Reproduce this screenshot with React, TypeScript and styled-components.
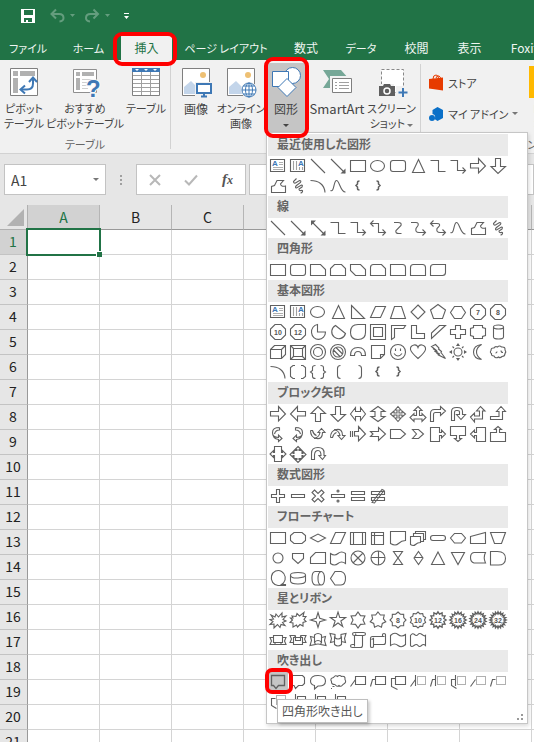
import React from "react";
import styled, { createGlobalStyle, css } from "styled-components";

const GREEN = "#217346";
const INK = "#606060";
const BLUE = "#3e78b5";

const GlobalStyle = createGlobalStyle`
  *, *::before, *::after { box-sizing: border-box; }
  body {
    margin: 0;
    overflow: hidden;
    font-family: "Noto Sans CJK JP", "Noto Sans", sans-serif;
    font-size: 12px;
    color: #444444;
  }
  button, input {
    font: inherit;
    color: inherit;
    border: 0;
    margin: 0;
    padding: 0;
    background: none;
    border-radius: 0;
  }
  svg { display: block; flex: none; }
`;

/* ---------- layout ---------- */

const Window = styled.div`
  display: flex;
  flex-direction: column;
  height: 100vh;
  overflow: hidden;
  background: #ffffff;
`;

const Marker = styled.span<{ $inset: string; $radius: number }>`
  position: absolute;
  z-index: 5;
  inset: ${(p) => p.$inset};
  border: 4px solid #ff0000;
  border-radius: ${(p) => p.$radius}px;
  pointer-events: none;
`;

const QuickBar = styled.div`
  display: flex;
  align-items: center;
  flex: none;
  height: 32px;
  padding-left: 20px;
  background: ${GREEN};
`;

const QuickButton = styled.button<{ $gap: number; $dim?: boolean }>`
  display: flex;
  align-items: center;
  margin-right: ${(p) => p.$gap}px;
  opacity: ${(p) => (p.$dim ? 0.3 : 1)};
`;

const TabBar = styled.nav`
  display: grid;
  grid-template-columns: 56px 65px 51px 108px 52px 58px 53px 53px 82px;
  flex: none;
  height: 28px;
  padding-top: 4px;
  background: ${GREEN};
`;

const Tab = styled.button<{ $active?: boolean; $kana?: boolean }>`
  position: relative;
  height: 24px;
  font-size: ${(p) => (p.$kana ? 11 : 12)}px;
  line-height: 22px;
  font-feature-settings: "palt";
  white-space: nowrap;
  color: ${(p) => (p.$active ? GREEN : "#f0f6f2")};
  background: ${(p) => (p.$active ? "#f1f1f1" : "transparent")};
`;

const Ribbon = styled.div`
  display: flex;
  flex: none;
  height: 94px;
  background: #f1f1f1;
  border-bottom: 1px solid #d2d2d2;
`;

const Group = styled.section<{ $pad?: number }>`
  display: flex;
  flex-direction: column;
  flex: none;
  padding: 3px ${(p) => p.$pad ?? 0}px 0;
`;

const Divider = styled.div`
  flex: none;
  width: 1px;
  margin: 4px 0;
  background: #d2d2d2;
`;

const GroupButtons = styled.div`
  display: flex;
  height: 73px;
`;

const GroupLabel = styled.div`
  font-size: 11px;
  line-height: 16px;
  text-align: center;
  color: #666666;
  font-feature-settings: "palt";
`;

const Anchor = styled.div`
  position: relative;
`;

const BigButton = styled.button<{ $w: number; $pressed?: boolean }>`
  display: flex;
  flex-direction: column;
  align-items: center;
  flex: none;
  gap: 3px;
  width: ${(p) => p.$w}px;
  height: 69px;
  padding-top: 3px;
  background: ${(p) => (p.$pressed ? "#c5c5c5" : "transparent")};
`;

const BigLabel = styled.span<{ $size?: number }>`
  display: block;
  font-size: ${(p) => p.$size ?? 11}px;
  line-height: 15px;
  white-space: nowrap;
  font-feature-settings: "palt";
`;

const Caret = styled.span<{ $light?: boolean }>`
  display: inline-block;
  vertical-align: middle;
  border: 3px solid transparent;
  border-bottom: 0;
  border-top-color: ${(p) => (p.$light ? "#777777" : "#444444")};
`;

const SmallColumn = styled.div`
  display: flex;
  flex-direction: column;
  padding-top: 4px;
  width: 92px;
`;

const SmallButton = styled.button`
  display: flex;
  align-items: center;
  gap: 4px;
  height: 31px;
  font-size: 11px;
  white-space: nowrap;
  font-feature-settings: "palt";
`;

/* ---------- formula bar ---------- */

const FormulaBar = styled.div`
  display: flex;
  align-items: center;
  flex: none;
  height: 51px;
  padding-left: 4px;
  background: #e6e6e6;
`;

const Box = styled.div<{ $w?: number }>`
  display: flex;
  align-items: center;
  justify-content: space-between;
  flex: ${(p) => (p.$w ? `0 0 ${p.$w}px` : "1 1 0")};
  height: 31px;
  padding: 0 6px;
  border: 1px solid #c3c3c3;
  background: #ffffff;
`;

const FormulaField = styled.div`
  display: flex;
  flex: 1 1 0;
  padding-left: 3px;
`;

const NameInput = styled.input`
  width: 70px;
  font-size: 14px;
`;

const FormulaInput = styled.input`
  width: 100%;
`;

const IconButton = styled.button`
  display: flex;
  justify-content: center;
  width: 24px;
`;

const Dots = styled.span`
  flex: none;
  width: 2px;
  height: 10px;
  margin: 0 14px;
  background: repeating-linear-gradient(#a0a0a0 0 2px, transparent 2px 4px);
`;

/* ---------- sheet ---------- */

const SheetArea = styled.div`
  flex: 1 1 0;
  min-height: 0;
  overflow: hidden;
`;

const Sheet = styled.table`
  table-layout: fixed;
  width: 604px;
  min-width: 100%;
  border-collapse: separate;
  border-spacing: 0;
  font-size: 14px;
`;

const Corner = styled.th`
  width: 28px;
  height: 25px;
  padding: 4px 3px 3px 7px;
  background: #e6e6e6;
  border-right: 1px solid #b0b0b0;
  border-bottom: 1px solid #b0b0b0;
`;

const ColHead = styled.th<{ $on?: boolean }>`
  height: 25px;
  padding: 0;
  font-weight: 400;
  line-height: 22px;
  color: ${(p) => (p.$on ? GREEN : "#222222")};
  background: ${(p) => (p.$on ? "#d2d2d2" : "#e6e6e6")};
  border-right: 1px solid #b5b5b5;
  border-bottom: 1px solid #999999;
`;

const RowHead = styled.th<{ $on?: boolean }>`
  height: 25px;
  padding: 0 1px 2px 0;
  font-weight: 400;
  line-height: 20px;
  color: ${(p) => (p.$on ? GREEN : "#222222")};
  background: ${(p) => (p.$on ? "#d2d2d2" : "#e6e6e6")};
  border-right: 1px solid #999999;
  border-bottom: 1px solid #c3c3c3;
`;

const Cell = styled.td<{ $on?: boolean }>`
  height: 25px;
  padding: 0;
  border-right: 1px solid #d4d4d4;
  border-bottom: 1px solid #d4d4d4;
  ${(p) =>
    p.$on &&
    css`
      position: relative;
      z-index: 1;
      &::before {
        content: "";
        position: absolute;
        inset: -2px;
        border: 2px solid ${GREEN};
      }
      &::after {
        content: "";
        position: absolute;
        right: -3px;
        bottom: -3px;
        width: 6px;
        height: 6px;
        background: ${GREEN};
        border: solid #ffffff;
        border-width: 1px 0 0 1px;
      }
    `}
`;

/* ---------- shapes menu ---------- */

const Menu = styled.div`
  position: absolute;
  z-index: 3;
  top: 69px;
  left: 0;
  width: 262px;
  padding: 1px;
  background: #ffffff;
  border: 1px solid #c6c6c6;
  box-shadow: 1px 2px 4px rgba(0, 0, 0, 0.15);
`;

const MenuTitle = styled.h3`
  width: 240px;
  height: 22px;
  margin: 0;
  padding-left: 9px;
  font-size: 12px;
  font-weight: 700;
  line-height: 20px;
  color: #666666;
  background: #eaeaea;
  font-feature-settings: "palt";
`;

const ShapeGrid = styled.div`
  display: grid;
  grid-template-columns: repeat(12, 20px);
  grid-auto-rows: 20px;
`;

const ShapeButton = styled.button<{ $on?: boolean }>`
  position: relative;
  width: 20px;
  height: 20px;
  background: ${(p) => (p.$on ? "#c5c5c5" : "transparent")};
`;

const Grip = styled.div`
  display: flex;
  justify-content: flex-end;
  height: 10px;
  padding: 1px 2px 0 0;
`;

const Tooltip = styled.span`
  position: absolute;
  z-index: 6;
  top: 27px;
  left: 9px;
  padding: 0 4px;
  font-size: 12px;
  line-height: 22px;
  white-space: nowrap;
  color: #575757;
  background: #ffffff;
  border: 1px solid #bebebe;
  box-shadow: 2px 2px 3px rgba(0, 0, 0, 0.2);
  font-feature-settings: "palt";
`;

/* ---------- shape drawings, on a 20 x 20 grid ---------- */

type Shape = { n: string; d: string; t?: string; dot?: string; fill?: string; w?: number; kind?: "box" | "vbox" };

const ring = (n: number, R: number, r: number) => {
  const pts: string[] = [];
  for (let i = 0; i < n * 2; i++) {
    const a = (Math.PI * i) / n - Math.PI / 2;
    const k = i % 2 ? r : R;
    pts.push(`${(10 + k * Math.cos(a)).toFixed(2)} ${(10 + k * Math.sin(a)).toFixed(2)}`);
  }
  return `M${pts.join("L")}z`;
};
const circle = (cx: number, cy: number, rx: number, ry = rx) =>
  `M${cx - rx} ${cy}a${rx} ${ry} 0 1 0 ${rx * 2} 0a${rx} ${ry} 0 1 0 ${-rx * 2} 0z`;

const RECT = "M2.5 4.5h15v11h-15z";
const OCT = "M7 2.5h6l4.5 4.5v6l-4.5 4.5h-6l-4.5-4.5v-6z";
const SCRIBBLE = "M8.5 2.5L5.5 5.500q0 2 2 1.500l4-2.500q2 0 1 2l-4 3q-2 2 0 2.500l5-3q1.500 0 .5 2l-3 2q0 2 2 1.500t1.500 1-2 1.500";
const FREE = "M3.500 16.500v-6l3-1 2.500-5h6.500l-3 3.500q.5 3 5 2v6.500z";
const CURVE = "M2.500 14.500c4 2 3-10 6-10s4 12 9 11.500";
const ARC = "M2.500 4.500c8 0 14 4 14.500 12";
const LB = "M11.500 5q-2 0-2 1.500v1.500l-1.500 1.500 1.500 1.500v1.500q0 1.500 2 1.500";
const RB = "M8.500 5q2 0 2 1.500v1.500l1.500 1.500-1.500 1.500v1.500q0 1.500-2 1.500";
const HEAD_SE = "M17.500 12.500v5h-5z";

const line: Shape = { n: "直線", d: "M3 3L17 17" };
const lineArrow: Shape = { n: "直線矢印", d: "M3 3L17 17", fill: HEAD_SE };
const elbow: Shape = { n: "カギ線", d: "M2.500 4.500h8v11h7" };
const elbowArrow: Shape = { n: "カギ線矢印", d: "M2.500 4.500h7v10h8M14.500 11.500l3 3-3 3" };
const box: Shape = { n: "テキスト ボックス", d: "M2.500 3.500h14v12h-14z", kind: "box" };
const vbox: Shape = { n: "縦書きテキスト ボックス", d: "M2.500 3.500h14v12h-14z", kind: "vbox" };
const rect: Shape = { n: "正方形/長方形", d: RECT };
const round: Shape = { n: "角丸四角形", d: "M5 4.500h10q2.500 0 2.500 2.500v6q0 2.500-2.500 2.500h-10q-2.500 0-2.500-2.500v-6q0-2.500 2.500-2.500z" };
const tri: Shape = { n: "二等辺三角形", d: "M10.500 3.500l6 13h-12z" };
const arrowR: Shape = { n: "右矢印", d: "M2.500 7.500h8v-5l7 7.500-7 7v-5h-8z" };
const arrowD: Shape = { n: "下矢印", d: "M7.500 2.500h5v8h5l-7.500 7-7-7h4.500z" };
const free: Shape = { n: "フリーフォーム", d: FREE };
const scribble: Shape = { n: "フリーハンド", d: SCRIBBLE };
const arc: Shape = { n: "円弧", d: ARC };
const curve: Shape = { n: "曲線", d: CURVE };
const lbrace: Shape = { n: "左中かっこ", d: LB, w: 1.5 };
const rbrace: Shape = { n: "右中かっこ", d: RB, w: 1.5 };

const sections: { title: string; shapes: Shape[] }[] = [
  {
    title: "最近使用した図形",
    shapes: [
      box, vbox, line, lineArrow, rect,
      { n: "円/楕円", d: circle(9.5, 10, 7, 5.5) },
      round, tri, elbow, elbowArrow, arrowR, arrowD,
      free, scribble, arc, curve, lbrace, rbrace,
    ],
  },
  {
    title: "線",
    shapes: [
      line, lineArrow,
      { n: "双方向矢印", d: "M4 4L17 17", fill: HEAD_SE + "M3 7.500v-5h5z" },
      elbow, elbowArrow,
      { n: "カギ線双方向矢印", d: "M3 5.500h7.500v9h7M14.500 11.500l3 3-3 3M5.500 2.500l-3 3 3 3" },
      { n: "曲線コネクタ", d: "M6 4.500h4q4 0 3 3l-5 5q-1 3 3 3h2.500" },
      { n: "曲線矢印", d: "M3 4.500h5q3 0 2 3l-2 3q-1 4 3 4h6M14.500 11.500l3 3-3 3" },
      { n: "曲線双方向矢印", d: "M3 5.500h6q4 0 2 3l-2 2q-1 4 3 4h5M14.500 11.500l3 3-3 3M5.500 2.500l-3 3 3 3" },
      curve, free, scribble,
    ],
  },
  {
    title: "四角形",
    shapes: [
      rect, round,
      { n: "1つの角を切り取る", d: "M2.500 4.500h10l5 5v6h-15z" },
      { n: "同じ側の角を切り取る", d: "M6.500 4.500h7l4 4v7h-15v-7z" },
      { n: "対角を切り取る", d: "M2.500 4.500h10l5 5v6h-10l-5-5z" },
      { n: "1つの角を切り取り丸める", d: "M5.500 4.500h8l4 4v7h-15v-8q0-3 3-3z" },
      { n: "1つの角を丸める", d: "M2.500 4.500h12q3 0 3 3v8h-15z" },
      { n: "同じ側の角を丸める", d: "M5.500 4.500h9q3 0 3 3v8h-15v-8q0-3 3-3z" },
      { n: "対角を丸める", d: "M5.500 4.500h12v8q0 3-3 3h-12v-8q0-3 3-3z" },
    ],
  },
  {
    title: "基本図形",
    shapes: [
      box, vbox,
      { n: "楕円", d: circle(9.5, 10, 7, 5.5) },
      tri,
      { n: "直角三角形", d: "M3.500 3.500l13 13h-13z" },
      { n: "平行四辺形", d: "M7.500 4.500h10l-5 11h-10z" },
      { n: "台形", d: "M6.500 4.500h7l4 12h-15z" },
      { n: "ひし形", d: "M10 3l7 7-7 7-7-7z" },
      { n: "五角形", d: "M10 2.500l7.500 5.500-3 8.500h-9l-3-8.500z" },
      { n: "六角形", d: "M6.500 4.500h7l4 6-4 6h-7l-4-6z" },
      { n: "七角形", d: OCT, t: "7" },
      { n: "八角形", d: OCT, t: "8" },
      { n: "十角形", d: OCT, t: "10" },
      { n: "十二角形", d: OCT, t: "12" },
      { n: "パイ", d: "M9.500 2.500a7 7.500 0 1 0 8 7.500h-8z" },
      { n: "弦", d: "M7.500 3.500a7 7 0 1 0 10 8z" },
      { n: "涙形", d: "M17.500 2.500v8q0 7-7.500 7t-7.500-7q0-8 7.500-8z" },
      { n: "フレーム", d: "M2.500 2.500h15v15h-15zM5.500 5.500h9v9h-9z" },
      { n: "フレーム (半分)", d: "M3.500 17.500v-14h14l-2 3h-9v9z" },
      { n: "L字", d: "M3.500 3.500h5v8h8v5h-13z" },
      { n: "斜め縞", d: "M11.500 3.500h6l-14 13v-5.500z" },
      { n: "十字形", d: "M7.500 3.500h5v4h5v5h-5v4h-5v-4h-5v-5h5z" },
      { n: "ブローチ", d: "M5.500 3.500h9v2l3 1v7l-3 1v2h-9v-2l-3-1v-7l3-1z" },
      { n: "円柱", d: "M5.500 5v10q0 2 5 2t5-2v-10M5.500 5q0-2 5-2t5 2-5 2-5-2z" },
      { n: "直方体", d: "M2.500 7.500l4-4h11v9l-4 4h-11zM2.500 7.500h11v9M13.500 7.500l4-4" },
      { n: "額縁", d: "M2.500 3.500h15v14h-15zM5.500 6.500h9v8h-9zM2.500 3.500l3 3M17.500 3.500l-3 3M2.500 17.500l3-3M17.500 17.500l-3-3" },
      { n: "ドーナツ", d: circle(10, 10, 7.5) + circle(10, 10, 4.5) },
      { n: "禁止", d: circle(10, 10, 7.5) + circle(10, 10, 5) + "M5.500 8l6.500 6.500M8 5.500l6.500 6.500" },
      { n: "アーチ", d: "M2.500 13.500q0-8 7.500-8t7.500 8h-4q0-4-3.500-4t-3.500 4z" },
      { n: "メモ", d: "M3.500 3.500h13v9l-4 4h-9zM12.500 16.500v-4h4" },
      { n: "スマイル", d: circle(10, 10, 7.5) + "M6 11.500q4 5 8 0M7.500 6.500v2.500M12.500 6.500v2.500" },
      { n: "ハート", d: "M10 5.500q1-3 4-2.500 4 1 3.500 4.500-.5 3-7.500 9-7-6-7.500-9-.5-3.500 3.500-4.500 3-.5 4 2.500z" },
      { n: "稲妻", d: "M7.500 2.500l3.500 3.500-.5 1 3 2.500-.5 1 4.500 6-7-3.500 1-1-4.500-2.500 1.500-1-5-4zM5 6.500l4.500 3.500M8.500 11l4 3" },
      { n: "太陽", d: circle(10, 10, 4) + "M9 3.500h2l-1-1.500zM9 16.500h2l-1 1.500zM3.500 9v2l-1.500-1zM16.500 9v2l1.500-1zM4.500 4.500l1.500 1.500M14 14l1.500 1.500M15.500 4.500l-1.500 1.500M6 14l-1.500 1.500" },
      { n: "月", d: "M13.500 2.500q-8 1-8 7.500t8 7.500q-5-3-5-7.500t5-7.500z" },
      { n: "雲", d: "M6 14q-3 0-2.500-2.500-2-1-.5-3 0-3 3-2.500 1-2 3.500-1 2-2 4 0 4-.5 3.500 3 1.500 2 0 3.500 0 3-3 3-2 2-3.500.5-3 2-4.500-1zM7.500 11q1.500 0 1.500-1.500M13 8.500q0 2 2 2" },
      arc,
      { n: "大かっこ", d: "M7 3.500h-2l-2.500 2v9l2.500 2h2M13 3.500h2l2.500 2v9l-2.500 2h-2" },
      { n: "中かっこ", d: "M7.500 3.500q-3 0-3 2v3l-2 1.500 2 1.500v3q0 2 3 2M12.500 3.500q3 0 3 2v3l2 1.500-2 1.500v3q0 2-3 2" },
      { n: "左大かっこ", d: "M12.500 3.500q-3 0-3 3v7q0 3 3 3" },
      { n: "右大かっこ", d: "M10.500 3.500q3 0 3 3v7q0 3-3 3" },
      lbrace, rbrace,
    ],
  },
  {
    title: "ブロック矢印",
    shapes: [
      arrowR,
      { n: "左矢印", d: "M17.500 7.500h-8v-5l-7 7.500 7 7v-5h8z" },
      { n: "上矢印", d: "M7.500 17.500h5v-8h5l-7.500-7-7 7h4.500z" },
      arrowD,
      { n: "左右矢印", d: "M2.500 10l5-6.500v4h5v-4l5 6.500-5 6.500v-4h-5v4z" },
      { n: "上下矢印", d: "M10 2.500l7 5h-4v5h4l-7 5-7-5h4v-5h-4z" },
      { n: "四方向矢印", d: "M10 2.500l3 3.500h-2v3h3v-2l3.500 3-3.500 3v-2h-3v3h2l-3 3.500-3-3.500h2v-3h-3v2l-3.500-3 3.500-3v2h3v-3h-2z" },
      { n: "三方向矢印", d: "M10 2.500l4 4h-2.500v5h2.500v-2l4 4-4 4v-2.500h-8v2.500l-4-4 4-4v2h2.500v-5h-2.500z" },
      { n: "屈折矢印", d: "M2.500 17.500v-8q0-4 4-4h6v-3l5 4.500-5 4.500v-3h-5q-2 0-2 2v7z" },
      { n: "Uターン矢印", d: "M3.500 16.500v-9q0-4 5-4h1q5 0 5 4v3h3l-4.500 5-4.500-5h3v-3q0-1-2-1h-1q-2 0-2 2v8z" },
      { n: "二方向矢印", d: "M2.500 13l4-4v3h5v-5h-3l4-4.500 4.500 4.500h-2.500v8h-8v3z" },
      { n: "屈折矢印 (上)", d: "M2.500 12.500h8.500v-5h-2.500l4.500-5 4.500 5h-3v8h-12z" },
      { n: "右カーブ矢印", d: "M11.500 3.500q-7 0-7 5t6 5v-2.500l3.500 3.500-3.500 3v-2q-6-1-6-7M11.500 3.500v2.500q-4 0-5 4" },
      { n: "左カーブ矢印", d: "M7.500 3.500q7 0 7 5t-6 5v-2.500l-3.500 3.500 3.500 3v-2q6-1 6-7M7.500 3.500v2.500q4 0 5 4" },
      { n: "上カーブ矢印", d: "M2.500 6.500q0 7 6 8t6-6h2.500l-3.500-4-3.500 4h2q-1 5-6 6M2.500 6.500h2q1 4 4 5" },
      { n: "下カーブ矢印", d: "M2.500 13.500q0-7 6-8t6 6h2.500l-3.500 4-3.500-4h2q-1-5-6-6M2.500 13.500h2q1-4 4-5" },
      { n: "ストライプ矢印", d: "M2.500 7v6M4.500 7v6M6.500 7.500h4v-5l7 7.500-7 7v-5h-4z" },
      { n: "V字形矢印", d: "M2.500 7.500h8v-4l7 6.500-7 6.500v-4h-8l2.500-2.500z" },
      { n: "ホームベース", d: "M2.500 5.500h10l5 4.500-5 4.500h-10z" },
      { n: "山形", d: "M4.500 5.500h6l5 4.500-5 4.500h-6l4-4.500z" },
      { n: "右矢印吹き出し", d: "M2.500 3.500h9v5h2v-2.500l4 4-4 4v-2.500h-2v6h-9z" },
      { n: "下矢印吹き出し", d: "M2.500 2.500h15v9h-6v3h2l-3.500 3-3.500-3h2v-3h-6z" },
      { n: "左矢印吹き出し", d: "M17.500 3.500h-9v5h-2v-2.500l-4 4 4 4v-2.500h2v6h9z" },
      { n: "上矢印吹き出し", d: "M2.500 17.500h15v-9h-6v-3h2l-3.500-3-3.500 3h2v3h-6z" },
      { n: "左右矢印吹き出し", d: "M6.500 2.500h7v6h1v-2l3.500 3.500-3.500 3.500v-2h-1v6h-7v-6h-1v2l-3.500-3.500 3.500-3.500v2h1z" },
      { n: "四方向矢印吹き出し", d: "M10 2.500l3 3h-2v1h3v3h1v-2l3 3-3 3v-2h-1v3h-3v1h2l-3 3-3-3h2v-1h-3v-3h-1v2l-3-3 3-3v2h1v-3h3v-1h-2z" },
      { n: "環状矢印", d: "M3.500 15.500v-6q0-6 6.500-6t6 6v2h1.500l-3 4-3.500-4h2q0-5-3-5t-3.500 4v5z" },
    ],
  },
  {
    title: "数式図形",
    shapes: [
      { n: "加算", d: "M8.500 3.500h3v5h5v3h-5v5h-3v-5h-5v-3h5z" },
      { n: "減算", d: "M3.500 8.500h13v3h-13z" },
      { n: "乗算", d: "M6.500 4l3.500 3.500 3.500-3.500 2.500 2.500-3.500 3.500 3.500 3.500-2.500 2.500-3.500-3.500-3.500 3.500-2.500-2.500 3.500-3.500-3.500-3.500z" },
      { n: "除算", d: "M3.500 8.500h13v3h-13z" + circle(10, 5, 1) + circle(10, 15, 1) },
      { n: "次の値と等しい", d: "M3.500 5.500h13v3h-13zM3.500 11.500h13v3h-13z" },
      { n: "等号否定", d: "M3.500 5.500h13v3h-13zM3.500 11.500h13v3h-13zM4 16.500l10-13 2 1-9.500 12.500z" },
    ],
  },
  {
    title: "フローチャート",
    shapes: [
      rect,
      { n: "代替処理", d: "M6 4.500h8l3.500 3v5l-3.500 3h-8l-3.500-3v-5z" },
      { n: "判断", d: "M2.500 10l7.500-4 7.500 4-7.500 4z" },
      { n: "データ", d: "M7.500 4.500h10l-5 11h-10z" },
      { n: "定義済み処理", d: "M2.500 4.500h15v12h-15zM5.500 4.500v12M14.500 4.500v12" },
      { n: "内部記憶", d: "M3.500 4.500h12v12h-12zM3.500 7.500h12M6.500 4.500v12" },
      { n: "書類", d: "M2.500 3.500h15v9q-4 0-7 3t-8 0z" },
      { n: "複数書類", d: "M2.500 8.500h10v6q-3 0-5 2t-5 0zM5.500 8v-2.500h10v8h-3M7.500 5v-1.500h10v8h-2" },
      { n: "端子", d: "M5 7.500h10q2.500 0 2.500 2.500t-2.500 2.500h-10q-2.500 0-2.500-2.500t2.500-2.500z" },
      { n: "準備", d: "M6.500 5.500h7l4 4.500-4 5h-7l-4-5z" },
      { n: "手操作入力", d: "M2.500 8.500l15-4v11h-15z" },
      { n: "手作業", d: "M2.500 4.500h15l-4 11h-7z" },
      { n: "結合子", d: circle(10, 10, 5) },
      { n: "他ページ結合子", d: "M4.500 5.500h11v5l-5.500 5-5.500-5z" },
      { n: "カード", d: "M7.500 4.500h10v11h-15v-6z" },
      { n: "せん孔テープ", d: "M2.500 5.500q4 3 7.500 0t7.500 0v10q-4-3-7.500 0t-7.500 0z" },
      { n: "和接合", d: circle(10, 10, 7) + "M5 5l10 10M15 5l-10 10" },
      { n: "論理和", d: circle(10, 10, 7) + "M3 9.500h14M10.500 3v14" },
      { n: "照合", d: "M5.500 3.500h9l-9 13h9z" },
      { n: "分類", d: "M10.500 3.500l4.500 6.500-4.500 6.500-4.500-6.500zM6 9.500h9" },
      { n: "抜出し", d: "M10 4l6.500 12.500h-13z" },
      { n: "組合せ", d: "M3.500 4.500h13l-6.500 12z" },
      { n: "記憶データ", d: "M6 4.500h11.500q-2.500 5 0 10.500h-11.500q-3.500-1-3.500-5.500t3.500-5z" },
      { n: "論理積ゲート", d: "M2.500 3.500h7q8 0 8 7t-8 6.500h-7z" },
      { n: "順次アクセス記憶", d: "M10 17.500a7 7.500 0 1 1 5.500-2.500l-2 1.500h4v1z" },
      { n: "磁気ディスク", d: "M2.500 7v6q0 3 7.500 3t7.500-3v-6M2.500 7q0-2.500 7.500-2.500t7.500 2.500-7.500 3-7.500-3z" },
      { n: "直接アクセス記憶", d: "M7 3.500h6.500q3 1 3 7t-3 6.500h-6.500q-3-1-3-7t3-6.500zM13 3.500q-3 1-3 7t3 6.500" },
      { n: "表示", d: "M7 3.500h6q4.500 1 4.500 7t-4.500 6.500h-6l-4.500-6.500z" },
    ],
  },
  {
    title: "星とリボン",
    shapes: [
      { n: "爆発1", d: "M3 5l4 2 1-3 2.500 3 3.500-4v4l4-1-3 3.500 3 1.500-3.500 1.500 2.500 3-4-1-1 3-2.500-3-3.500 3.500v-4l-4 .5 3-3-3-2 3.500-.5z" },
      { n: "爆発2", d: "M4 6l4 .5 1-3 2.500 2.500 4.500-3.500-1 4h3l-2 3 2 2-3 1v3.500l-3-1.500-2.500 2.500-1-2-3.500 2v-4l-3-.5 2.500-2.500-2-2h2.500z" },
      { n: "星4", d: ring(4, 7.5, 2.5) },
      { n: "星5", d: ring(5, 8, 3) },
      { n: "星6", d: ring(6, 8, 5) },
      { n: "星7", d: ring(7, 8, 5.5) },
      { n: "星8", d: ring(8, 8, 6.2), t: "8" },
      { n: "星10", d: ring(10, 8, 6.5), t: "10" },
      { n: "星12", d: ring(12, 8.2, 6), t: "12", w: 1.3 },
      { n: "星16", d: ring(16, 8.2, 6), t: "16", w: 1.3 },
      { n: "星24", d: ring(18, 8.2, 6), t: "24", w: 1.3 },
      { n: "星32", d: ring(20, 8.2, 6), t: "32", w: 1.3 },
      { n: "上リボン", d: "M5.500 5.500h9v7h-9zM5.500 7.500h-3.500l1.500 3.500-1.500 3.500h5v-2M14.500 7.500h3.500l-1.500 3.500 1.500 3.500h-5v-2M7 14.500h6" },
      { n: "下リボン", d: "M5.500 7.500h9v7h-9zM5.500 12.500h-3.500l1.500-3.500-1.500-3.500h5v2h6v-2h5l-1.500 3.500 1.500 3.500h-3.500M7.500 5.500v5h5v-5" },
      { n: "上カーブリボン", d: "M6.500 12v-7q3.500-3 7 0v7q-3.500-3-7 0zM6.500 7.500l-4-1 1 4-1.500 5 5-1v-2M13.500 7.500l4-1-1 4 1.500 5-5-1v-2M7 14.500q3-1 6 0" },
      { n: "下カーブリボン", d: "M6.500 7.500v7q3.500 3 7 0v-7q-3.500 3-7 0zM6.500 11.500l-4 1 1-4-1.500-5 5 1v3M13.500 11.500l4 1-1-4 1.500-5-5 1v3" },
      { n: "縦スクロール", d: "M6.500 5.500v9h-2q-2 0-2 1.500t2 1.500h8q2 0 2-2v-10M6.500 5.500q-2 0-2-1.500t2-1.500h9q2 0 2 1.500t-2 1.500h-9q2 0 1-2M6.500 14.500v2" },
      { n: "横スクロール", d: "M4.500 6.500h10v-2q0-1 1.500-1t1.500 1v8q0 2-2 2h-10v2q0 1-1.500 1t-1.500-1v-8q0-2 2-2zM14.500 6.500h2M5.500 14.500v-6l-2 1" },
      { n: "波線", d: "M2.500 5.500q4-4 7.500-1t7.500 0v10q-4 4-7.500 1t-7.500 0z" },
      { n: "二重波", d: "M2.500 5.500q2-3 4-1t3.500 0 4 0 3.500 1v10q-2-2-4 0t-3.500 0-4 0-3.500 0z" },
    ],
  },
  {
    title: "吹き出し",
    shapes: [
      { n: "四角形吹き出し", d: "M3.500 3.500h13v10h-6l-2.500 3-2.500-3h-2z", w: 1.3 },
      { n: "角丸四角形吹き出し", d: "M4.500 3.500h10l2 2v6l-2 2h-4l-3 3-1.500-3h-1.500l-2-2v-6z" },
      { n: "円形吹き出し", d: "M6.500 13.500q-4-1-4-4.500 0-5.500 7.500-5.500t7.500 5.500-7.500 5l-3.500 3z" },
      { n: "雲形吹き出し", d: "M7 12.500q-4 0-3.500-3-2-3 2-4 2-3 4-1 2-2 4 0 4-1 3.500 3 2 3-2 5-2 3-4 1-2 2-4-1M4.500 14.500h2M3 16.500h1" },
      { n: "線吹き出し1", d: "M7.500 4.500h10v8h-10zM7.500 7.500l-5 7" },
      { n: "線吹き出し2", d: "M7.500 4.500h10v8h-10zM7.500 7.500h-3l-2 7" },
      { n: "線吹き出し3", d: "M7.500 4.500h10v8h-10zM7.500 6.500h-4v8l6 3" },
      { n: "強調線1", d: "M7.500 3v11M7.500 7.500l-5 7", dot: "M9.500 4.500h8v8h-8z" },
      { n: "強調線2", d: "M7.500 3v11M7.500 7.500h-3l-2 7", dot: "M9.500 4.500h8v8h-8z" },
      { n: "強調線3", d: "M7.500 3v11M7.500 7.500h-4v6l5 3", dot: "M9.500 4.500h8v8h-8z" },
      { n: "枠なし1", d: "M7.500 7.500l-5 7", dot: "M8.500 4.500h9v8h-9z" },
      { n: "枠なし2", d: "M7.500 7.500h-3l-2 7", dot: "M8.500 4.500h9v8h-9z" },
      { n: "枠なし3", d: "M7.500 6.500h-4v7l5 3", dot: "M8.500 3.500h9v9h-9z" },
      { n: "強調線枠付き1", d: "M7.500 2v12M7.500 7.500l-5 7M9.500 4.500h8v8h-8z" },
      { n: "強調線枠付き2", d: "M7.500 2v12M7.500 7.500h-3l-2 7M9.500 4.500h8v8h-8z" },
      { n: "強調線枠付き3", d: "M7.500 2v12M7.500 7.500h-4v6l5 3M9.500 4.500h8v8h-8z" },
    ],
  },
];

const ShapeIcon = ({ shape }: { shape: Shape }) => (
  <svg width="20" height="20" viewBox="0 0 20 20" fill="none" stroke={INK} strokeWidth={shape.w ?? 1.1} aria-hidden="true">
    <path d={shape.d} />
    {shape.fill && <path d={shape.fill} fill={INK} stroke="none" />}
    {shape.dot && <path d={shape.dot} strokeWidth="1" strokeDasharray="1 1" />}
    {shape.kind === "box" && (
      <>
        <path d="M11 6.500h4M11 8.500h4M5 11.500h10M5 13.500h10" strokeOpacity="0.5" />
        <text x="4" y="10" fontSize="8" fontWeight="700" fill={BLUE} stroke="none" fontFamily="Liberation Sans, sans-serif">A</text>
      </>
    )}
    {shape.kind === "vbox" && (
      <>
        <path d="M5.500 5v9M8.500 5v9M11.500 11v3M14.500 11v3" strokeOpacity="0.6" />
        <text x="10" y="10" fontSize="8" fontWeight="700" fill={BLUE} stroke="none" fontFamily="Liberation Sans, sans-serif">A</text>
      </>
    )}
    {shape.t && (
      <text x="10" y="12.500" textAnchor="middle" fontSize="7" fontWeight="700" fill="#555555" stroke="none" fontFamily="Liberation Sans, sans-serif">
        {shape.t}
      </text>
    )}
  </svg>
);

const ShapesMenu = () => (
  <Menu>
    {sections.map((s) => (
      <section key={s.title}>
        <MenuTitle>{s.title}</MenuTitle>
        <ShapeGrid>
          {s.shapes.map((shape, i) => {
            const on = s.title === "吹き出し" && i === 0;
            return (
              <ShapeButton key={i} type="button" $on={on} aria-label={shape.n}>
                <ShapeIcon shape={shape} />
                {on && <Marker $inset="-4px -5px -2px -3px" $radius={7} />}
                {on && <Tooltip role="tooltip">{shape.n}</Tooltip>}
              </ShapeButton>
            );
          })}
        </ShapeGrid>
      </section>
    ))}
    <Grip>
      <svg width="8" height="8" viewBox="0 0 8 8" fill="#999999" aria-hidden="true">
        <path d="M5 1h2v2h-2zM5 5h2v2h-2zM1 5h2v2h-2z" />
      </svg>
    </Grip>
  </Menu>
);

/* ---------- ribbon drawings, 32 high ---------- */

const PivotIcon = () => (
  <svg width="32" height="32" viewBox="0 0 32 32" fill="none">
    <path d="M2.500 2.500h27v27h-27z" fill="#fff" stroke="#7f7f7f" />
    <path d="M5 5h5v5h-5zM12 5h15v5h-15zM5 12h5v15h-5z" fill="#b1b1b1" />
    <path d="M13.500 23.500h5.500q6 0 6-6v-5" stroke={BLUE} strokeWidth="2" />
    <path d="M17 19.500l-4.500 4 4.500 4M21 16l4-4.500 4 4.500" stroke={BLUE} strokeWidth="2" />
  </svg>
);

const RecommendIcon = () => (
  <svg width="32" height="32" viewBox="0 0 32 32" fill="none">
    <path d="M4.500 3.500h23v23h-23z" fill="#fff" stroke="#8f8f8f" />
    <path d="M7 6h4v4h-4zM13 6h12v4h-12zM7 12h4v12h-4z" fill="#b1b1b1" />
    <path d="M13 13.500h11M13 16.500h6M13 19.500h6M13 22.500h6" stroke="#d0d0d0" />
    <text x="17" y="31" fontSize="24" fontWeight="700" fill={BLUE} stroke="#f8f8f8" strokeWidth="2" paintOrder="stroke" fontFamily="Liberation Sans, sans-serif">?</text>
  </svg>
);

const TableIcon = () => (
  <svg width="32" height="32" viewBox="0 0 32 32" fill="none">
    <path d="M2.500 2.500h27v27h-27z" fill="#fff" stroke="#7f7f7f" />
    <path d="M3 9.500h26M3 13.500h26M3 17.500h26M3 21.500h26M3 25.500h26M11.500 6v23M20.500 6v23" stroke="#a0a0a0" />
    <path d="M2 2h28v4h-28z" fill={BLUE} />
    <path d="M5 3h4l-2 2zM14 3h4l-2 2zM23 3h4l-2 2z" fill="#fff" />
  </svg>
);

const PictureBase = () => (
  <>
    <path d="M2.500 2.500h27v27h-27z" fill="#fff" stroke="#7f7f7f" />
    <path d="M4 28v-7l7-6 6 6v7z" fill="#c3d5ea" />
    <circle cx="23" cy="9" r="3" fill="#eec073" />
  </>
);

const PictureIcon = () => (
  <svg width="32" height="32" viewBox="0 0 32 32" fill="none">
    <PictureBase />
    <path d="M15 16h17v16h-17z" fill="#f1f1f1" />
    <path d="M17 18h14v9h-14z" fill="#fff" stroke={BLUE} strokeWidth="2" />
    <path d="M21 30.500h6M24 28v2" stroke={BLUE} strokeWidth="2" />
  </svg>
);

const OnlineIcon = () => (
  <svg width="32" height="32" viewBox="0 0 32 32" fill="none">
    <PictureBase />
    <circle cx="24" cy="24" r="8" fill="#f1f1f1" />
    <g stroke={BLUE} fill="none">
      <circle cx="24" cy="24" r="7" fill="#fff" />
      <ellipse cx="24" cy="24" rx="3.500" ry="7" />
      <path d="M24 17v14M17 24h14M18.500 20h11M18.500 28h11" />
    </g>
  </svg>
);

const ShapesIcon = () => (
  <svg width="32" height="32" viewBox="0 0 32 32" fill="#fff" stroke={BLUE}>
    <circle cx="22.500" cy="9.500" r="8" />
    <path d="M2.500 5.500h16v15h-16z" />
    <path d="M17 12.500l9 9-9 9-9-9z" />
  </svg>
);

const SmartArtIcon = () => (
  <svg width="32" height="32" viewBox="0 0 32 32" fill="none">
    <path d="M2 4h18l8 9-8 9h-18l6-9z" fill="#76a797" />
    <path d="M10.500 11.500h21v16h-21z" fill="#fff" stroke="#f1f1f1" strokeWidth="3" />
    <path d="M11.500 12.500h19v14h-19z" fill="#fff" stroke="#7f7f7f" />
    <path d="M14 16.500h2M14 19.500h2M14 22.500h2M18 16.500h10M18 19.500h10M18 22.500h10" stroke="#a0a0a0" />
  </svg>
);

const ScreenshotIcon = () => (
  <svg width="32" height="32" viewBox="0 0 32 32" fill="none">
    <path d="M5.500 3.500h22v23h-22z" fill="#fff" stroke="#888" strokeDasharray="3 2" />
    <path d="M2 18h16v14h-16zM20 20h12v12h-12z" fill="#f1f1f1" />
    <path d="M3 20h4l1-2h6l1 2h4v10h-16z" fill="#5f5f5f" />
    <circle cx="11" cy="25" r="3" stroke="#fff" strokeWidth="1.500" />
    <path d="M27 22v9M22.500 26.500h9" stroke={BLUE} strokeWidth="2" />
  </svg>
);

const StoreIcon = () => (
  <svg width="15" height="17" viewBox="0 0 15 17" fill="none">
    <path d="M4 5q0-4 3-4 2 0 2.500 3M7 4q1-3 3-2t1.500 3" stroke="#e73b00" />
    <path d="M0 5l14-1.500v13l-14-2z" fill="#e73b00" />
  </svg>
);

const AddinIcon = () => (
  <svg width="15" height="16" viewBox="0 0 15 16">
    <path d="M8.500 1l5.500 3v8l-5.500 3-3-2q2-4-2-5v-4z" fill="#0a70c8" />
    <circle cx="3" cy="12" r="3" fill="#0a70c8" />
  </svg>
);

const columns = ["A", "B", "C", "D", "E", "F", "G", "H"];
const rows = Array.from({ length: 21 }, (_, i) => i + 1);
const tabs = ["ファイル", "ホーム", "挿入", "ページ レイアウト", "数式", "データ", "校閲", "表示", "Foxit PDF"];
const isKana = (t: string) => /^[\u30a0-\u30ff ]+$/.test(t);

export default function App() {
  return (
    <Window>
      <GlobalStyle />
      <QuickBar>
        <QuickButton $gap={14} type="button" aria-label="上書き保存">
          <svg width="16" height="16" viewBox="0 0 16 16" fill="none">
            <path d="M1 1h14v14h-14zM4 2v5h9v-5zM4 10v4h2v-2h2v2h4v-4z" fill="#fff" fillRule="evenodd" />
          </svg>
        </QuickButton>
        <QuickButton $gap={7} $dim type="button" aria-label="元に戻す">
          <svg width="28" height="16" viewBox="0 0 28 16" fill="none" stroke="#fff" strokeWidth="2">
            <path d="M6 1.500l-4.500 4.500 4.500 4.500M2 6h7q4.500 0 4.500 4 0 3-4 3.500" />
            <path d="M20 6h5l-2.500 3z" fill="#fff" stroke="none" />
          </svg>
        </QuickButton>
        <QuickButton $gap={11} $dim type="button" aria-label="やり直し">
          <svg width="28" height="16" viewBox="0 0 28 16" fill="none" stroke="#fff" strokeWidth="2">
            <path d="M8.500 1.500l4.500 4.500-4.500 4.500M12.500 6h-7q-4.500 0-4.500 4 0 3 4 3.500" />
            <path d="M20 6h5l-2.500 3z" fill="#fff" stroke="none" />
          </svg>
        </QuickButton>
        <QuickButton $gap={0} type="button" aria-label="カスタマイズ">
          <svg width="6" height="8" viewBox="0 0 6 8" fill="#fff">
            <path d="M0 1h5v1h-5zM0 4h5l-2.500 3z" />
          </svg>
        </QuickButton>
      </QuickBar>

      <TabBar>
        {tabs.map((t) => (
          <Tab key={t} type="button" $active={t === "挿入"} $kana={isKana(t)}>
            {t}
            {t === "挿入" && <Marker $inset="-4px -5px -6px -8px" $radius={9} />}
          </Tab>
        ))}
      </TabBar>

      <Ribbon>
        <Group>
          <GroupButtons>
            <BigButton $w={48} type="button">
              <PivotIcon />
              <BigLabel>ピボット<br />テーブル</BigLabel>
            </BigButton>
            <BigButton $w={74} type="button">
              <RecommendIcon />
              <BigLabel>おすすめ<br />ピボットテーブル</BigLabel>
            </BigButton>
            <BigButton $w={48} type="button">
              <TableIcon />
              <BigLabel>テーブル</BigLabel>
            </BigButton>
          </GroupButtons>
          <GroupLabel>テーブル</GroupLabel>
        </Group>
        <Divider />
        <Group $pad={5}>
          <GroupButtons>
            <BigButton $w={40} type="button">
              <PictureIcon />
              <BigLabel $size={12}>画像</BigLabel>
            </BigButton>
            <BigButton $w={50} type="button">
              <OnlineIcon />
              <BigLabel>オンライン<br />画像</BigLabel>
            </BigButton>
            <Anchor>
              <BigButton $w={40} $pressed type="button" aria-expanded="true">
                <ShapesIcon />
                <BigLabel $size={12}>図形<br /><Caret /></BigLabel>
              </BigButton>
              <Marker $inset="-6px -3px -2px -2px" $radius={9} />
              <ShapesMenu />
            </Anchor>
            <BigButton $w={62} type="button">
              <SmartArtIcon />
              <BigLabel $size={13}>SmartArt</BigLabel>
            </BigButton>
            <BigButton $w={47} type="button">
              <ScreenshotIcon />
              <BigLabel>スクリーン<br />ショット <Caret $light /></BigLabel>
            </BigButton>
          </GroupButtons>
        </Group>
        <Divider />
        <Group $pad={8}>
          <GroupButtons>
            <SmallColumn>
              <SmallButton type="button"><StoreIcon />ストア</SmallButton>
              <SmallButton type="button"><AddinIcon />マイ アドイン<Caret $light /></SmallButton>
            </SmallColumn>
            <BigButton $w={48} type="button">
              <svg width="32" height="32" viewBox="0 0 32 32">
                <path d="M0 0h32v32h-32z" fill="#ffb900" />
              </svg>
              <BigLabel>Bing<br />地図</BigLabel>
            </BigButton>
            <BigButton $w={38} type="button">
              <svg width="32" height="32" viewBox="0 0 32 32">
                <path d="M0 0h32v32h-32z" fill="#217346" />
              </svg>
              <BigLabel>People</BigLabel>
            </BigButton>
          </GroupButtons>
          <GroupLabel>アドイン</GroupLabel>
        </Group>
      </Ribbon>

      <FormulaBar>
        <Box $w={102}>
          <NameInput aria-label="名前ボックス" defaultValue="A1" />
          <Caret $light />
        </Box>
        <Dots />
        <Box $w={110}>
          <IconButton type="button" aria-label="キャンセル">
            <svg width="14" height="14" viewBox="0 0 14 14" stroke="#b8b8b8" strokeWidth="2">
              <path d="M2 2l10 10M12 2l-10 10" />
            </svg>
          </IconButton>
          <IconButton type="button" aria-label="入力">
            <svg width="14" height="14" viewBox="0 0 14 14" fill="none" stroke="#b8b8b8" strokeWidth="2">
              <path d="M1 7.500l4 4 8-9" />
            </svg>
          </IconButton>
          <IconButton type="button" aria-label="関数の挿入">
            <svg width="16" height="18" viewBox="0 0 16 18" fill="#555" fontFamily="Liberation Serif, serif" fontStyle="italic" fontWeight="700">
              <text x="3" y="13" fontSize="15">f</text>
              <text x="8" y="13" fontSize="12">x</text>
            </svg>
          </IconButton>
        </Box>
        <FormulaField>
          <Box>
            <FormulaInput aria-label="数式バー" />
          </Box>
        </FormulaField>
      </FormulaBar>

      <SheetArea>
        <Sheet>
          <thead>
            <tr>
              <Corner scope="col">
                <svg width="17" height="17" viewBox="0 0 17 17" fill="#b2b2b2" aria-hidden="true">
                  <path d="M17 0v17h-17z" />
                </svg>
              </Corner>
              {columns.map((c) => (
                <ColHead key={c} scope="col" $on={c === "A"}>{c}</ColHead>
              ))}
            </tr>
          </thead>
          <tbody>
            {rows.map((r) => (
              <tr key={r}>
                <RowHead scope="row" $on={r === 1}>{r}</RowHead>
                {columns.map((c) => (
                  <Cell key={c} $on={r === 1 && c === "A"} />
                ))}
              </tr>
            ))}
          </tbody>
        </Sheet>
      </SheetArea>
    </Window>
  );
}
